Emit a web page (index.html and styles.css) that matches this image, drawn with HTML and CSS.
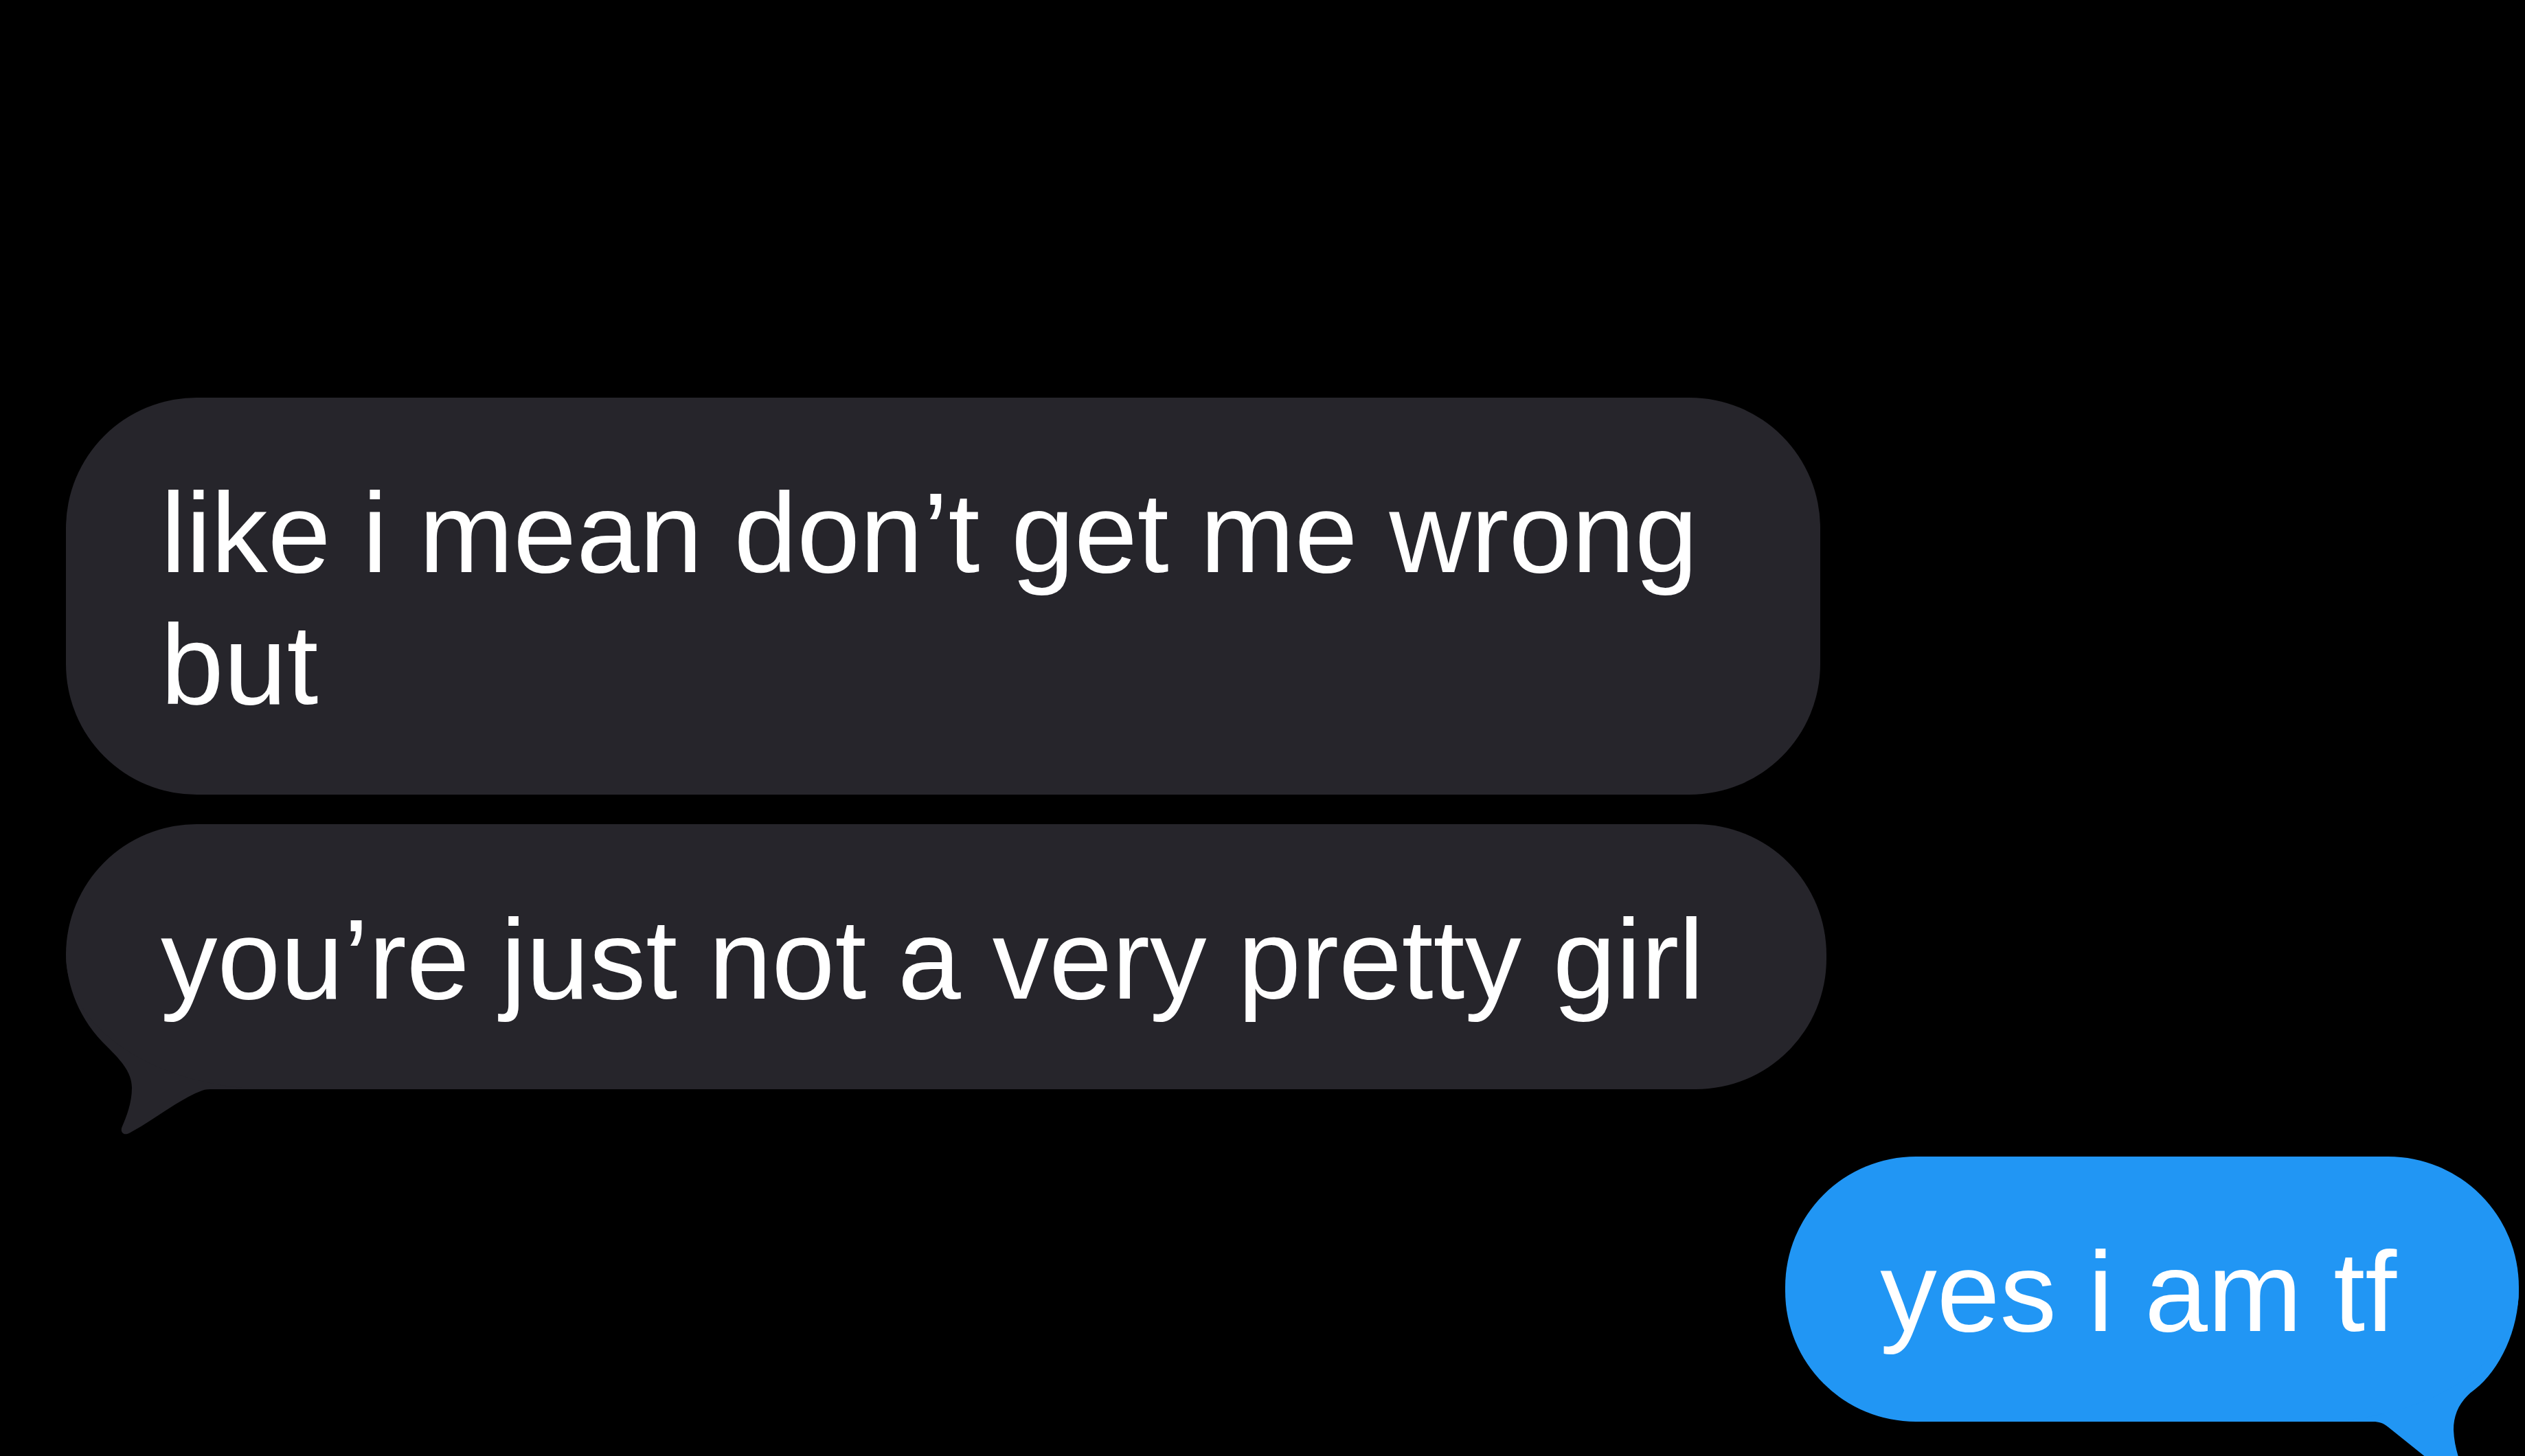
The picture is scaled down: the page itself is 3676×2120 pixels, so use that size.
FILE: index.html
```html
<!DOCTYPE html>
<html lang="en">
<head>
  <meta charset="UTF-8">
  <title>Messages</title>
  <link rel="stylesheet" href="styles.css">
</head>
<body>
  <div class="chat">
    <div class="bubble in">like i mean don’t get me wrong<br>but</div>

    <div class="bubble in tailed">you’re just not a very pretty girl
      <svg class="tail" viewBox="0 0 330 270" width="330" height="270">
        <path d="M0 0 C0 50 20 100 60 138 C80 158 96 175 96 198 C96 220 88 240 82 254 C78 262 84 268 92 264 C130 244 165 214 198 202 C203 200 208 200 214 200 H330 V0 Z"/>
      </svg>
    </div>

    <div class="bubble out tailed">yes i am tf
      <svg class="tail" viewBox="0 0 320 290" width="320" height="290">
        <path d="M0 0 H320 C320 60 292 118 256 146 C234 162 225 182 225 205 C226 235 238 262 246 278 C250 286 242 291 236 286 L130 201 C123 195 116 193 108 193 H0 Z"/>
      </svg>
    </div>
  </div>
</body>
</html>
```

FILE: styles.css
```css
html { background: #000; }
html, body { margin: 0; height: 2120px; overflow: hidden; }
body { font-family: "Liberation Sans", Arial, sans-serif; }

.chat { display: flex; flex-direction: column; padding: 579px 9px 0 96px; }

.bubble {
  position: relative;
  width: fit-content;
  padding: 101px 178px 93px 138px;
  border-radius: 190px;
  font-size: 165px;
  line-height: 192px;
  color: #fff;
  white-space: nowrap;
}
.bubble + .bubble { margin-top: 43px; }

.in { align-self: flex-start; background: #26252b; }
.out { align-self: flex-end; background: #2196f4; margin-top: 98px !important; }

/* tail sits behind the bubble body, so the text stays on top */
.tail { position: absolute; display: block; z-index: -1; }
.in .tail { left: 0; bottom: -70px; fill: #26252b; }
.out .tail { right: 0; bottom: -97px; fill: #2196f4; }

.in.tailed { border-bottom-left-radius: 300px 195px; }
.out.tailed { border-bottom-right-radius: 300px 190px; }
```
